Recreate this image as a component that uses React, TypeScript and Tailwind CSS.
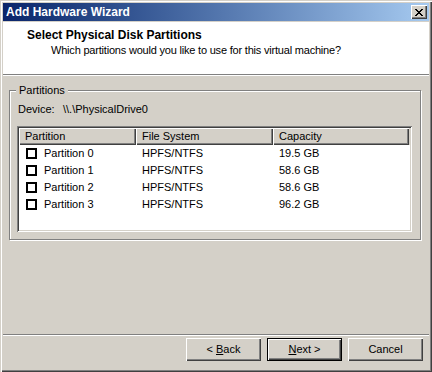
const raised =
  "shadow-[inset_1px_1px_#ffffff,inset_-1px_-1px_#404040,inset_-2px_-2px_#808080]";

type Partition = { name: string; fs: string; size: string };

const partitions: Partition[] = [
  { name: "Partition 0", fs: "HPFS/NTFS", size: "19.5 GB" },
  { name: "Partition 1", fs: "HPFS/NTFS", size: "58.6 GB" },
  { name: "Partition 2", fs: "HPFS/NTFS", size: "58.6 GB" },
  { name: "Partition 3", fs: "HPFS/NTFS", size: "96.2 GB" },
];

function CloseGlyph() {
  return (
    <svg width="8" height="7" viewBox="0 0 8 7" shapeRendering="crispEdges">
      <path d="M0 0h2v1h1v1h2v-1h1v-1h2v1h-1v1h-1v1h-1v1h1v1h1v1h1v1h-2v-1h-1v-1h-2v1h-1v1h-2v-1h1v-1h1v-1h1v-1h-1v-1h-1v-1h-1z" fill="#000" />
    </svg>
  );
}

function HeaderCell({ label, width }: { label: string; width: string }) {
  return (
    <div className={`${width} h-[17px] flex items-center pl-[6px] bg-[#d4d0c8] ${raised}`}>
      {label}
    </div>
  );
}

function WizardButton({
  children,
  isDefault = false,
}: {
  children: React.ReactNode;
  isDefault?: boolean;
}) {
  return (
    <button
      type="button"
      className={`w-[75px] h-[23px] bg-[#d4d0c8] flex items-center justify-center ${
        isDefault ? "border border-black" : ""
      } ${raised}`}
    >
      {children}
    </button>
  );
}

export default function App() {
  return (
    <div className="w-[432px] h-[372px] bg-[#d4d0c8] p-[3px] flex flex-col font-['Liberation_Sans',Arial,sans-serif] text-[11px] leading-[13px] text-black shadow-[inset_1px_1px_#d4d0c8,inset_2px_2px_#ffffff,inset_-1px_-1px_#404040,inset_-2px_-2px_#808080]">
      {/* title bar */}
      <div className="h-[18px] flex items-center justify-between pl-[3px] pr-[2px] bg-linear-to-r from-[#0a246a] to-[#a6caf0]">
        <span className="text-white font-bold text-[12px] leading-[14px] -mt-[1px]">Add Hardware Wizard</span>
        <button
          type="button"
          className={`w-[16px] h-[14px] bg-[#d4d0c8] flex items-center justify-center ${raised}`}
          aria-label="Close"
        >
          <CloseGlyph />
        </button>
      </div>

      {/* header */}
      <div className="mt-[1px] h-[52px] bg-white pt-[6px]">
        <p className="pl-[24px] font-bold text-[12px] leading-[14px]">Select Physical Disk Partitions</p>
        <p className="pl-[48px] mt-[2px] tracking-[-0.2px]">
          Which partitions would you like to use for this virtual machine?
        </p>
      </div>
      <div className="h-px bg-[#808080]" />
      <div className="h-px bg-white" />

      {/* partitions group */}
      <fieldset className="ml-[6px] mt-[8px] w-[412px] border border-[#808080] shadow-[inset_1px_1px_#ffffff,1px_1px_#ffffff] pb-[7px]">
        <legend className="ml-[6px] px-[3px] bg-[#d4d0c8] leading-[13px]">Partitions</legend>
        <div className="pl-[7px]">
          <div className="mt-[6px] pl-[1px] flex">
            <span className="w-[45px]">Device:</span>
            <span>{"\\\\.\\PhysicalDrive0"}</span>
          </div>
          <div className="mt-[10px] w-[395px] h-[106px] p-[2px] bg-white shadow-[inset_1px_1px_#808080,inset_-1px_-1px_#ffffff,inset_2px_2px_#404040,inset_-2px_-2px_#d4d0c8]">
            <div className="flex bg-[#d4d0c8]">
              <HeaderCell label="Partition" width="w-[117px]" />
              <HeaderCell label="File System" width="w-[137px]" />
              <HeaderCell label="Capacity" width="w-[136px]" />
            </div>
            <div className="bg-white">
              {partitions.map((p) => (
                <div key={p.name} className="flex h-[17px] items-center">
                  <div className="w-[117px] flex items-center pl-[7px]">
                    <span className="shrink-0 w-[11px] h-[11px] border-2 border-black bg-white" />
                    <span className="ml-[7px]">{p.name}</span>
                  </div>
                  <div className="w-[137px] pl-[6px]">{p.fs}</div>
                  <div className="w-[136px] pl-[6px]">{p.size}</div>
                </div>
              ))}
            </div>
          </div>
        </div>
      </fieldset>

      {/* footer */}
      <div className="mt-auto">
        <div className="h-px bg-[#808080]" />
        <div className="h-px bg-white" />
        <div className="mt-[2px] pb-[8px] pr-[6px] flex justify-end gap-[6px]">
          <WizardButton>
            &lt; <span className="underline ml-[3px]">B</span>ack
          </WizardButton>
          <WizardButton isDefault>
            <span className="underline">N</span>ext &gt;
          </WizardButton>
          <WizardButton>Cancel</WizardButton>
        </div>
      </div>
    </div>
  );
}
